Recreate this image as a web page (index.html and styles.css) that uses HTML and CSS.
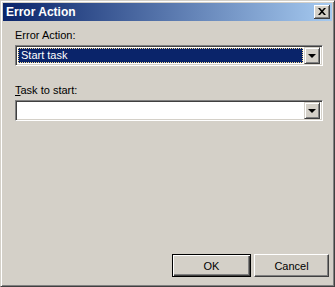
FILE: index.html
```html
<!DOCTYPE html>
<html lang="en">
<head>
    <meta charset="UTF-8">
    <title>Error Action</title>
    <link rel="stylesheet" href="styles.css">
</head>
<body>
    <div class="window">
        <div class="titlebar">
            <span class="title">Error Action</span>
            <button class="close-btn" title="Close">
                <svg width="8" height="7" viewBox="0 0 8 7">
                    <path d="M0 0h2l2 2.3 2-2.3h2l-3 3.5 3 3.5h-2l-2-2.3-2 2.3h-2l3-3.5z" fill="#000"/>
                </svg>
            </button>
        </div>

        <div class="content">
            <div class="field">
                <label class="field-label">Error Action:</label>
                <div class="combo">
                    <div class="combo-value selected"><span>Start task</span></div>
                    <div class="combo-btn"><span class="arrow"></span></div>
                </div>
            </div>

            <div class="field">
                <label class="field-label"><u>T</u>ask to start:</label>
                <div class="combo">
                    <div class="combo-value"></div>
                    <div class="combo-btn"><span class="arrow"></span></div>
                </div>
            </div>
        </div>

        <div class="actions">
            <button class="btn btn-default">OK</button>
            <button class="btn">Cancel</button>
        </div>
    </div>
</body>
</html>
```

FILE: styles.css
```css
* {
    margin: 0;
    padding: 0;
    box-sizing: border-box;
}

body {
    font-family: "Liberation Sans", Arial, sans-serif;
    font-size: 11px;
    background: #d4d0c8;
    color: #000;
}

.window {
    width: 335px;
    height: 287px;
    display: flex;
    flex-direction: column;
    background: #d4d0c8;
    border-top: 1px solid #d4d0c8;
    border-left: 1px solid #d4d0c8;
    border-right: 1px solid #404040;
    border-bottom: 1px solid #404040;
    box-shadow: inset 1px 1px #fff, inset -1px -1px #808080;
    padding: 2px;
}

.titlebar {
    height: 18px;
    display: flex;
    align-items: center;
    justify-content: space-between;
    background: linear-gradient(to right, #0a246a, #a6caf0);
    padding: 0 2px 0 3px;
}

.title {
    color: #fff;
    font-weight: bold;
    font-size: 12px;
    line-height: 14px;
}

.close-btn {
    width: 16px;
    height: 14px;
    display: flex;
    align-items: center;
    justify-content: center;
    background: #d4d0c8;
    border: none;
    box-shadow: inset -1px -1px #404040, inset 1px 1px #fff, inset -2px -2px #808080;
    padding: 0 1px 1px 0;
}

.content {
    padding: 8px 9px 0 12px;
    display: flex;
    flex-direction: column;
    gap: 18px;
}

.field-label {
    display: block;
    line-height: 13px;
    margin-bottom: 3px;
}

.combo {
    height: 21px;
    display: flex;
    background: #fff;
    border-top: 1px solid #808080;
    border-left: 1px solid #808080;
    border-right: 1px solid #fff;
    border-bottom: 1px solid #fff;
    box-shadow: inset 1px 1px #404040, inset -1px -1px #d4d0c8;
    padding: 2px;
}

.combo-value {
    flex: 1;
    line-height: 13px;
}

.combo-value.selected {
    background: #0a246a;
    color: #fff;
    border: 1px dotted #f5db95;
    padding: 0 2px;
}

.combo-btn {
    width: 16px;
    height: 17px;
    margin: -1px 0 0 1px;
    display: flex;
    align-items: center;
    justify-content: center;
    background: #d4d0c8;
    border-top: 1px solid #d4d0c8;
    border-left: 1px solid #d4d0c8;
    border-right: 1px solid #404040;
    border-bottom: 1px solid #404040;
    box-shadow: inset 1px 1px #fff, inset -1px -1px #808080;
}

.arrow {
    width: 0;
    height: 0;
    border-left: 4px solid transparent;
    border-right: 4px solid transparent;
    border-top: 4px solid #000;
    margin-top: 1px;
}

.actions {
    margin-top: auto;
    display: flex;
    justify-content: flex-end;
    gap: 3px;
    padding: 0 3px 7px 0;
}

.btn {
    width: 75px;
    height: 23px;
    font-family: "Liberation Sans", Arial, sans-serif;
    font-size: 11px;
    color: #000;
    background: #d4d0c8;
    border-top: 1px solid #fff;
    border-left: 1px solid #fff;
    border-right: 1px solid #404040;
    border-bottom: 1px solid #404040;
    box-shadow: inset -1px -1px #808080;
}

.btn-default {
    width: 79px;
    border: 1px solid #000;
    box-shadow: inset 1px 1px #fff, inset -1px -1px #404040, inset -2px -2px #808080;
}
```
